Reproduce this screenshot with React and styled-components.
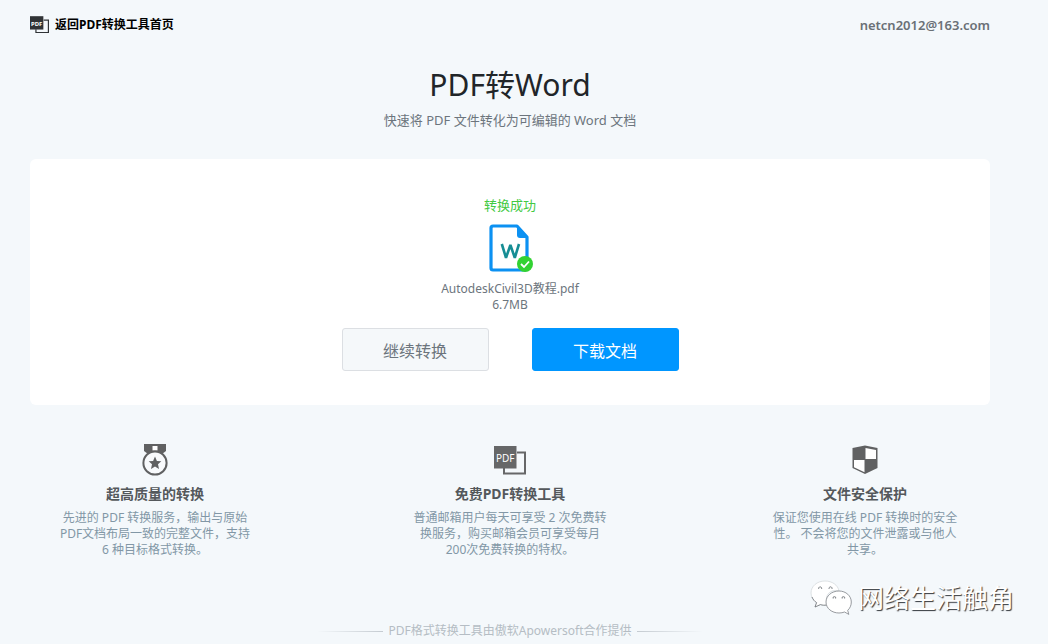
import React from "react";
import styled, { createGlobalStyle } from "styled-components";

const GlobalStyle = createGlobalStyle`
  * { box-sizing: border-box; }
  body {
    margin: 0;
    background: #f4f8fb;
    color: #212529;
    font-family: "Noto Sans", "Noto Sans CJK SC", sans-serif;
    font-size: 12px;
    line-height: 16px;
  }
  h1, h2, p { margin: 0; }
`;

const Page = styled.div`
  position: relative;
  padding: 0 58px 4px 30px;
`;

const Header = styled.header`
  display: flex;
  align-items: center;
  justify-content: space-between;
  height: 49px;
`;

const HomeLink = styled.a`
  display: flex;
  align-items: center;
  gap: 6px;
  color: #000;
  font-weight: 700;
  text-decoration: none;
`;

const Account = styled.a`
  color: #6a7076;
  font-size: 13px;
  font-weight: 600;
  text-decoration: none;
`;

const Intro = styled.section`
  padding: 16px 0 29px;
  text-align: center;
`;

const Title = styled.h1`
  font-size: 30px;
  font-weight: 400;
  line-height: 40px;
`;

const Subtitle = styled.p`
  margin-top: 5px;
  color: #6c757d;
  font-size: 13px;
  line-height: 20px;
`;

const Card = styled.section`
  display: flex;
  flex-direction: column;
  align-items: center;
  padding: 36px 20px 34px;
  border-radius: 6px;
  background: #fff;
  color: #6c757d;
`;

const Status = styled.p`
  margin-bottom: 9px;
  color: #42c942;
  font-size: 13px;
  line-height: 20px;
`;

const FileName = styled.p`
  margin-top: 9px;
`;

const Actions = styled.div`
  display: flex;
  gap: 43px;
  margin-top: 15px;
`;

const Button = styled.button`
  width: 147px;
  height: 43px;
  padding: 0;
  border: 1px solid ${(p) => (p.$primary ? "#0096ff" : "#dcdfe3")};
  border-radius: 3px;
  background: ${(p) => (p.$primary ? "#0096ff" : "#f5f8fa")};
  color: ${(p) => (p.$primary ? "#fff" : "#6c757d")};
  font-family: inherit;
  font-size: 16px;
  cursor: pointer;
`;

const Features = styled.section`
  display: flex;
  justify-content: space-between;
  padding-top: 39px;
`;

const Feature = styled.article`
  display: flex;
  flex-direction: column;
  align-items: center;
  width: 250px;
  text-align: center;
`;

const FeatureTitle = styled.h2`
  margin: 8px 0 6px;
  color: #54585c;
  font-size: 14px;
  font-weight: 700;
  line-height: 20px;
`;

const FeatureText = styled.p`
  color: #8297a6;
`;

const Footer = styled.footer`
  display: flex;
  align-items: center;
  justify-content: center;
  gap: 6px;
  padding-top: 64px;
  color: #b5bdc4;
  line-height: 18px;
`;

const Rule = styled.span`
  width: 66px;
  height: 1px;
  background: linear-gradient(${(p) => (p.$flip ? "to left" : "to right")}, transparent, #c5cbd1);
`;

const Watermark = styled.div`
  position: absolute;
  right: 34px;
  bottom: 26px;
  display: flex;
  align-items: center;
  gap: 6px;
  color: #fff;
  font-size: 26px;
  line-height: 40px;
  text-shadow: 1px 1px 1px #33383d;
`;

function PdfIcon({ size, color }) {
  return (
    <svg width={size} height={size} viewBox="0 0 32 32" aria-hidden="true">
      <path d="M23 8.5H31V29.5H10V24" fill="none" stroke={color} strokeWidth="2" />
      <path d="M0 2H22.5V24.5H0Z" fill={color} />
      <text x="11.2" y="18" textAnchor="middle" fill="#fff" fontSize="10" fontFamily="Noto Sans, sans-serif">PDF</text>
    </svg>
  );
}

function WordFileIcon() {
  return (
    <svg width="48" height="48" viewBox="0 0 48 48" aria-hidden="true">
      <path d="M7 2H31L41 13V44Q41 46 39 46H7Q5 46 5 44V4Q5 2 7 2Z" fill="#fff" stroke="#0c91f2" strokeWidth="3.2" strokeLinejoin="round" />
      <path d="M31 1L42 14H34Q31 14 31 11Z" fill="#0c91f2" />
      <path d="M15.8 20L20 33.8L24.4 21L28.8 33.8L33 20" fill="none" stroke="#168d94" strokeWidth="2.6" strokeLinejoin="bevel" />
      <circle cx="39" cy="40" r="8" fill="#32d232" />
      <path d="M35 40L38 43L43 37.5" fill="none" stroke="#fff" strokeWidth="1.8" />
    </svg>
  );
}

function MedalIcon() {
  return (
    <svg width="32" height="32" viewBox="0 0 32 32" aria-hidden="true">
      <path d="M5 0H27V7L23 10H9L5 7Z" fill="#606162" />
      <path d="M13.5 2H18.5V6.5H13.5Z" fill="#fff" />
      <circle cx="16" cy="19" r="11.6" fill="#f8fafc" stroke="#606162" strokeWidth="2" />
      <path d="M16 12.5L17.9 16.9L22.3 17.2L19 20.3L20 25L16 22.5L12 25L13 20.3L9.7 17.2L14.1 16.9Z" fill="#606162" />
    </svg>
  );
}

function ShieldIcon() {
  return (
    <svg width="32" height="32" viewBox="0 0 32 32" aria-hidden="true">
      <path d="M16 1.5L28.5 4V24L16 30L3.5 24V4Z" fill="#606162" />
      <path d="M16.5 4L27 6V15H16.5Z" fill="#fff" />
      <path d="M5 16H15.5V28.2L5 23.2Z" fill="#fff" />
    </svg>
  );
}

function ChatIcon() {
  return (
    <svg width="42" height="36" viewBox="0 0 42 36" aria-hidden="true">
      <g fill="#fff" strokeWidth="0.8" strokeLinejoin="round">
        <path d="M15 1C7 1 1 6.3 1 13C1 17 3.2 20.4 6.6 22.6L5 27L10.4 24.6C13 25.4 15 25.4 17.5 25C13 12 24 9 29 11C28 5 22 1 15 1Z" stroke="#d5dadd" />
        <path d="M2 17C3 19.5 4.6 21.4 6.6 22.6L5 27L10.4 24.6C12.5 25.2 14.5 25.4 16.5 25" stroke="#686d72" />
        <path d="M29 11C21.5 11 16 16 16 22C16 28.5 22 33 29 33C31 33 33 32.6 34.6 32L38.8 34.4L37.7 30.3C40 28.4 41.3 25.2 41.3 22C41.3 16 36 11 29 11Z" stroke="#7d8286" />
      </g>
      <g fill="none" stroke="#777c80" strokeWidth="1">
        <path d="M8.8 9A1.5 1.5 0 1 1 11.5 9M19.2 9A1.5 1.5 0 1 1 21.9 9" />
        <path d="M23.2 18.5A1.3 1.3 0 1 1 25.6 18.5M32.2 18.5A1.3 1.3 0 1 1 34.6 18.5" />
      </g>
    </svg>
  );
}

const features = [
  {
    icon: <MedalIcon />,
    title: "超高质量的转换",
    lines: ["先进的 PDF 转换服务，输出与原始", "PDF文档布局一致的完整文件，支持", "6 种目标格式转换。"],
  },
  {
    icon: <PdfIcon size={32} color="#666768" />,
    title: "免费PDF转换工具",
    lines: ["普通邮箱用户每天可享受 2 次免费转", "换服务，购买邮箱会员可享受每月", "200次免费转换的特权。"],
  },
  {
    icon: <ShieldIcon />,
    title: "文件安全保护",
    lines: ["保证您使用在线 PDF 转换时的安全", "性。 不会将您的文件泄露或与他人", "共享。"],
  },
];

export default function App() {
  return (
    <Page lang="zh-CN">
      <GlobalStyle />
      <Header>
        <HomeLink href="#home">
          <PdfIcon size={19} color="#303336" />
          返回PDF转换工具首页
        </HomeLink>
        <Account href="mailto:netcn2012@163.com">netcn2012@163.com</Account>
      </Header>
      <main>
        <Intro>
          <Title>PDF转Word</Title>
          <Subtitle>快速将 PDF 文件转化为可编辑的 Word 文档</Subtitle>
        </Intro>
        <Card>
          <Status>转换成功</Status>
          <WordFileIcon />
          <FileName>AutodeskCivil3D教程.pdf</FileName>
          <p>6.7MB</p>
          <Actions>
            <Button type="button">继续转换</Button>
            <Button type="button" $primary>下载文档</Button>
          </Actions>
        </Card>
        <Features>
          {features.map((item) => (
            <Feature key={item.title}>
              {item.icon}
              <FeatureTitle>{item.title}</FeatureTitle>
              <FeatureText>
                {item.lines.map((line, i) => (
                  <React.Fragment key={line}>
                    {i > 0 && <br />}
                    {line}
                  </React.Fragment>
                ))}
              </FeatureText>
            </Feature>
          ))}
        </Features>
      </main>
      <Footer>
        <Rule />
        <span>PDF格式转换工具由傲软Apowersoft合作提供</span>
        <Rule $flip />
      </Footer>
      <Watermark>
        <ChatIcon />
        <span>网络生活触角</span>
      </Watermark>
    </Page>
  );
}
